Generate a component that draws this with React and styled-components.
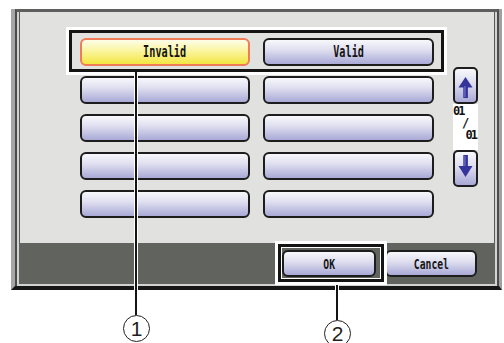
import React from 'react'
import styled, { createGlobalStyle } from 'styled-components'

const GlobalStyle = createGlobalStyle`
  html, body { margin: 0; padding: 0; background: #fff; }
  body { font-family: "DejaVu Sans", sans-serif; }
`

const keys = [
  { label: 'Invalid', selected: true },
  { label: 'Valid' },
  {}, {}, {}, {}, {}, {}, {}, {},
]

const UpArrow = () => (
  <svg width="21" height="33" viewBox="0 0 21 33">
    <polygon points="10.5,8 3.5,18.5 17.5,18.5" fill="#34349a" />
    <rect x="8.3" y="17" width="4.6" height="12" fill="#34349a" />
    <rect x="9.2" y="17" width="1.4" height="11" fill="#6a6ac4" />
  </svg>
)

const DownArrow = () => (
  <svg width="21" height="33" viewBox="0 0 21 33">
    <rect x="8.3" y="3" width="4.6" height="12" fill="#34349a" />
    <rect x="9.2" y="4" width="1.4" height="11" fill="#6a6ac4" />
    <polygon points="3.5,14 17.5,14 10.5,25" fill="#34349a" />
  </svg>
)

class App extends React.Component {
  render() {
    return (
      <Page>
        <GlobalStyle />
        <Frame>
          <FrameInner>
            <Panel>
              <Grid>
                {keys.map((k, i) => (
                  <KeyButton key={i} $selected={k.selected}>
                    {k.label ? <Label>{k.label}</Label> : null}
                  </KeyButton>
                ))}
              </Grid>
              <Pager>
                <ArrowButton><UpArrow /></ArrowButton>
                <Count>
                  <CountLine $align="left">01</CountLine>
                  <CountLine $align="center">/</CountLine>
                  <CountLine $align="right">01</CountLine>
                </Count>
                <ArrowButton><DownArrow /></ArrowButton>
              </Pager>
            </Panel>
            <BottomBar>
              <ActionButton $width={94}><Label $scale={0.72}>OK</Label></ActionButton>
              <ActionButton $width={92}><Label $scale={0.72}>Cancel</Label></ActionButton>
            </BottomBar>
          </FrameInner>
        </Frame>

        <Mark style={{ left: 69, top: 30, width: 375, height: 42 }} />
        <Mark style={{ left: 278, top: 244, width: 106, height: 38 }} $inner />
        <Leader style={{ left: 134, top: 72, height: 243 }} />
        <Leader style={{ left: 335, top: 285, height: 35 }} />
        <Callout style={{ left: 123, top: 315 }}>1</Callout>
        <Callout style={{ left: 324, top: 320 }}>2</Callout>
      </Page>
    )
  }
}

const Page = styled.div`
  position: relative;
  width: 504px;
  height: 343px;
  overflow: hidden;
  padding-top: 9px;
  box-sizing: border-box;
`

const Frame = styled.div`
  margin-left: 11px;
  width: 491px;
  box-sizing: border-box;
  background: #d2d2d2;
  border-left: 4px solid #a6a6a6;
  border-right: 3px solid #a0a0a0;
  border-bottom: 4px solid #161616;
`

const FrameInner = styled.div`
  border-left: 2px solid #4c4c4c;
  border-right: 2px solid #4c4c4c;
  border-top: 3px solid #5e5e5e;
  padding: 0 2px 2px 2px;
`

const Panel = styled.div`
  height: 231px;
  box-sizing: border-box;
  background: #e1e2e0;
  border-left: 1px solid #5a5a5a;
  border-right: 1px solid #5a5a5a;
  padding: 26px 0 0 60px;
  display: flex;
  align-items: flex-start;
  gap: 19px;
`

const Grid = styled.div`
  display: grid;
  grid-template-columns: 170px 171px;
  grid-auto-rows: 28px;
  column-gap: 13px;
  row-gap: 10px;
`

const KeyButton = styled.button`
  box-sizing: border-box;
  height: 28px;
  margin: 0;
  padding: 0;
  display: flex;
  align-items: center;
  justify-content: center;
  border-radius: 6px;
  border: 2px solid ${p => (p.$selected ? '#ef7c56' : '#1d1d1d')};
  background: ${p => (p.$selected
    ? 'linear-gradient(#fdfde8 0%, #fbf6a8 40%, #f3e642 100%)'
    : 'linear-gradient(#f8f8fc 0%, #e0e0f0 40%, #a9a9d7 100%)')};
  font-family: "DejaVu Sans Mono", monospace;
  font-weight: bold;
  font-size: 15px;
  color: #141414;
`

const Label = styled.span`
  display: inline-block;
  transform: scaleX(${p => p.$scale || 0.68});
`

const Pager = styled.div`
  margin-top: 29px;
  width: 25px;
  display: flex;
  flex-direction: column;
`

const ArrowButton = styled.div`
  box-sizing: border-box;
  width: 25px;
  height: 37px;
  border: 2px solid #1d1d1d;
  border-radius: 5px;
  background: linear-gradient(#f8f8fc 0%, #dcdcee 45%, #a9a9d7 100%);
  display: flex;
  align-items: center;
  justify-content: center;
`

const Count = styled.div`
  background: #fff;
  height: 46px;
  box-sizing: border-box;
  padding: 1px 2px 0 0;
  font-family: "DejaVu Sans Mono", monospace;
  font-weight: bold;
  font-size: 12px;
  line-height: 12px;
  color: #111;
`

const CountLine = styled.div`
  text-align: ${p => p.$align};
  letter-spacing: -2px;
`

const BottomBar = styled.div`
  height: 41px;
  box-sizing: border-box;
  background: #60635e;
  padding: 7px 18px 0 0;
  display: flex;
  justify-content: flex-end;
  align-items: flex-start;
  gap: 9px;
`

const ActionButton = styled.div`
  box-sizing: border-box;
  width: ${p => p.$width}px;
  height: 27px;
  border: 2px solid #1d1d1d;
  border-radius: 6px;
  background: linear-gradient(#f8f8fc 0%, #dcdcee 45%, #a9a9d7 100%);
  display: flex;
  align-items: center;
  justify-content: center;
  font-family: "DejaVu Sans Mono", monospace;
  font-weight: bold;
  font-size: 13.5px;
  color: #141414;
`

const Mark = styled.div`
  position: absolute;
  box-sizing: border-box;
  border: 3px solid #141414;
  box-shadow: 0 0 0 3px #fff${p => (p.$inner ? ', inset 0 0 0 1px #fff' : '')};
`

const Leader = styled.div`
  position: absolute;
  width: 2px;
  background: #141414;
  border-left: 1px solid #fff;
  border-right: 1px solid #fff;
`

const Callout = styled.div`
  position: absolute;
  box-sizing: border-box;
  width: 27px;
  height: 27px;
  border: 1.5px solid #231f20;
  border-radius: 50%;
  display: flex;
  align-items: center;
  justify-content: center;
  font-family: "Liberation Sans", sans-serif;
  font-size: 21px;
  color: #231f20;
  background: #fff;
`

export default App
